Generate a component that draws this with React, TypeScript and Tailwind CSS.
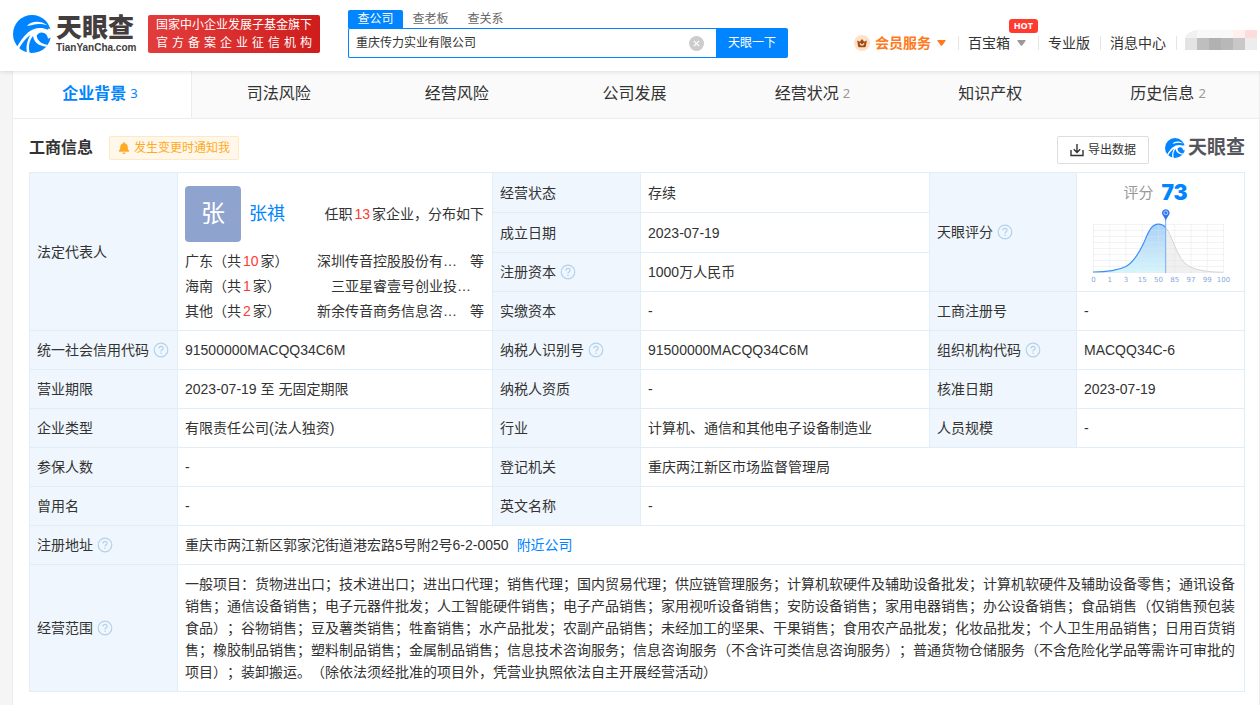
import { useState, type ReactNode } from "react";
import { FaBell } from "react-icons/fa";

const sections = [
  { name: "企业背景", count: 3 },
  { name: "司法风险" },
  { name: "经营风险" },
  { name: "公司发展" },
  { name: "经营状况", count: 2 },
  { name: "知识产权" },
  { name: "历史信息", count: 2 },
];

const searchTabs = ["查公司", "查老板", "查关系"];

const holdings = [
  { area: "广东", count: 10, company: "深圳传音控股股份有…", more: true },
  { area: "海南", count: 1, company: "三亚星睿壹号创业投…", more: false },
  { area: "其他", count: 2, company: "新余传音商务信息咨…", more: true },
];

const axis = [0, 1, 3, 15, 50, 85, 97, 99, 100];

const scope =
  "一般项目：货物进出口；技术进出口；进出口代理；销售代理；国内贸易代理；供应链管理服务；计算机软硬件及辅助设备批发；计算机软硬件及辅助设备零售；通讯设备销售；通信设备销售；电子元器件批发；人工智能硬件销售；电子产品销售；家用视听设备销售；安防设备销售；家用电器销售；办公设备销售；食品销售（仅销售预包装食品）；谷物销售；豆及薯类销售；牲畜销售；水产品批发；农副产品销售；未经加工的坚果、干果销售；食用农产品批发；化妆品批发；个人卫生用品销售；日用百货销售；橡胶制品销售；塑料制品销售；金属制品销售；信息技术咨询服务；信息咨询服务（不含许可类信息咨询服务）；普通货物仓储服务（不含危险化学品等需许可审批的项目）；装卸搬运。（除依法须经批准的项目外，凭营业执照依法自主开展经营活动）";

function LogoMark({ className }: { className?: string }) {
  return (
    <svg viewBox="0 0 114 114" className={className} aria-hidden="true">
      <circle cx="57" cy="57" r="57" fill="#0084ff" />
      <path d="M42 32C56 18 82 16 103 31C86 25 70 26 58 30C52 32 47 33 42 32Z" fill="#fff" />
      <path
        d="M104 44C84 35 60 39 44 53C29 66 19 82 10 99L16 104C26 85 38 70 52 60C42 78 38 96 42 113L50 114C45 94 49 76 60 63C63 82 77 93 100 95L104 89C86 87 73 77 71 62C75 53 86 49 95 55C101 59 104 64 105 71L118 66V48L108 40Z"
        fill="#fff"
      />
    </svg>
  );
}

function Caret({ className }: { className?: string }) {
  return (
    <svg viewBox="0 0 9 6" className={`h-1.5 w-[9px] ${className}`} aria-hidden="true">
      <path d="M1 0H8Q9.3 0 8.5 1L5.2 5.4Q4.5 6.2 3.8 5.4L0.5 1Q-0.3 0 1 0Z" fill="currentColor" />
    </svg>
  );
}

function HelpIcon() {
  return (
    <svg viewBox="0 0 16 16" fill="none" className="h-4 w-4 shrink-0" aria-hidden="true">
      <circle cx="8" cy="8" r="6.8" stroke="#b3d1ea" strokeWidth="1.2" />
      <path
        d="M5.9 6.5C5.9 5.2 6.8 4.4 8 4.4S10.1 5.2 10.1 6.3C10.1 7.7 8 7.8 8 9.5"
        stroke="#b3d1ea"
        strokeWidth="1.2"
      />
      <circle cx="8" cy="11.3" r="0.8" fill="#b3d1ea" />
    </svg>
  );
}

function CrownIcon() {
  return (
    <svg viewBox="0 0 16 16" className="h-4 w-4" aria-hidden="true">
      <circle cx="8" cy="8" r="8" fill="#ffe0c8" />
      <path
        d="M3.2 5.6L5.8 6.8L8 4L10.2 6.8L12.8 5.6L11.9 11.2Q11.7 12.3 10.6 12.3H5.4Q4.3 12.3 4.1 11.2Z"
        fill="#a04c12"
      />
      <path d="M5.9 8.4Q8 11.8 10.1 8.4" stroke="#ffe0c8" strokeWidth="1.2" fill="none" />
    </svg>
  );
}

function ExportIcon() {
  return (
    <svg viewBox="0 0 14 14" fill="none" className="h-3.5 w-3.5" aria-hidden="true">
      <path
        d="M1 7V12.5H13V7M7 1V9.2M3.8 6.2L7 9.4L10.2 6.2"
        stroke="#333"
        strokeWidth="1.4"
      />
    </svg>
  );
}

function AccountTile() {
  return (
    <svg viewBox="0 0 72 20" className="h-5 w-[72px]" aria-hidden="true">
      <path d="M0 8Q2 1 12 0V8Z" fill="#f1f1f1" />
      <rect x="12" width="36" height="8" fill="#f8f8f8" />
      <rect x="48" width="12" height="8" fill="#ffefef" />
      <rect x="60" width="12" height="8" fill="#ffdcdc" />
      <rect y="8" width="12" height="12" fill="#e3e3e3" />
      <rect x="12" y="8" width="12" height="12" fill="#bebebe" />
      <rect x="24" y="8" width="12" height="12" fill="#b1b1b1" />
      <rect x="36" y="8" width="12" height="12" fill="#b8b8b8" />
      <rect x="48" y="8" width="12" height="12" fill="#c8c8c8" />
      <rect x="60" y="8" width="12" height="12" fill="#ededed" />
    </svg>
  );
}

function ScoreChart() {
  return (
    <svg viewBox="0 0 152 78" className="mx-auto h-[78px] w-[152px]" role="img" aria-label="天眼评分 73">
      <defs>
        <linearGradient id="score-fill" x1="0" y1="0" x2="0" y2="1">
          <stop offset="0" stopColor="#a9d2f8" />
          <stop offset="1" stopColor="#d6f5fc" />
        </linearGradient>
      </defs>
      <path
        d="M81.7 20.5C85.5 25 88 33 91 39.7C94 46 96 50.5 99.3 54.5C103 58.5 106 60 111 61.8C118 64 128 65.2 139 65.2V65.5H81.7Z"
        fill="#f0f0f0"
      />
      <path
        d="M9 65C26 65 34 63.5 42 59.5C50 55 55 46 59.5 36.5C63 29 66 17.2 74.5 17.2C78 17.2 80 18.5 81.7 20.5V65.5H9Z"
        fill="url(#score-fill)"
      />
      {axis.map((n, i) => (
        <line key={n} x1={9.5 + i * 16.25} x2={9.5 + i * 16.25} y1="17" y2="66" stroke="#dfe3e8" strokeOpacity="0.6" strokeWidth="0.7" />
      ))}
      {axis.map((n, i) => (
        <line key={n} x1="9" x2="140" y1={17.5 + i * 6} y2={17.5 + i * 6} stroke="#dfe3e8" strokeOpacity="0.6" strokeWidth="0.7" />
      ))}
      <path
        d="M81.7 20.5C85.5 25 88 33 91 39.7C94 46 96 50.5 99.3 54.5C103 58.5 106 60 111 61.8C118 64 128 65.2 139 65.2"
        fill="none"
        stroke="#d4d4d4"
      />
      <path
        d="M9 65C26 65 34 63.5 42 59.5C50 55 55 46 59.5 36.5C63 29 66 17.2 74.5 17.2C78 17.2 80 18.5 81.7 20.5"
        fill="none"
        stroke="#3d8ff5"
        strokeWidth="1.2"
      />
      <line x1="81.7" x2="81.7" y1="13" y2="66" stroke="#7aabf3" />
      <path d="M78 5.8C78 1 85.6 1 85.6 5.8C85.6 8.4 82.7 10.5 81.8 14C80.9 10.5 78 8.4 78 5.8Z" fill="#2f76ee" />
      <circle cx="81.8" cy="5.8" r="1.9" fill="none" stroke="#c5dcff" strokeWidth="0.9" />
      {axis.map((n, i) => (
        <text
          key={n}
          x={9.5 + i * 16.25}
          y="75"
          textAnchor="middle"
          fill="#86a8dc"
          className="font-['DejaVu_Sans'] text-[7px]"
        >
          {n}
        </text>
      ))}
    </svg>
  );
}

function Label({ children, help, rowSpan }: { children: ReactNode; help?: boolean; rowSpan?: number }) {
  return (
    <th
      scope="row"
      rowSpan={rowSpan}
      className="border border-[#e1edf7] bg-[#eff6fd] py-2 pr-2 pl-[7px] text-left font-normal"
    >
      <span className="flex items-center gap-1 whitespace-nowrap">
        {children}
        {help && <HelpIcon />}
      </span>
    </th>
  );
}

function Value({ children = "-", colSpan }: { children?: ReactNode; colSpan?: number }) {
  return (
    <td colSpan={colSpan} className="border border-[#e1edf7] py-2 pr-2 pl-[7px] [text-spacing-trim:space-all]">
      {children}
    </td>
  );
}

function Count({ children }: { children: ReactNode }) {
  return <span className="mx-0.5 text-[#ff3b30]">{children}</span>;
}

function Header() {
  const [query, setQuery] = useState("重庆传力实业有限公司");
  const [tab, setTab] = useState("查公司");

  return (
    <header className="relative flex items-start bg-white pt-2.5 pr-[3px] pb-[13px] pl-[13px] shadow-[0_1px_4px_rgba(0,0,0,0.12)]">
      <a href="#" className="mt-[5px] flex h-[38px] items-center gap-[5px]">
        <LogoMark className="h-[38px] w-[38px]" />
        <span className="flex w-20 flex-col text-[#443d3e]">
          <span className="text-[26px] leading-7 font-black">天眼查</span>
          <span className="text-[10px] leading-3 font-bold">TianYanCha.com</span>
        </span>
      </a>
      <div className="mt-[5px] ml-3 h-[38px] w-[172px] rounded-xs bg-linear-to-r from-[#e33c3c] to-[#cf1c1c] px-2 text-xs leading-[18px] whitespace-nowrap text-white">
        <p className="pt-px">国家中小企业发展子基金旗下</p>
        <p className="[text-align-last:justify]">官方备案企业征信机构</p>
      </div>
      <div className="ml-7 w-[440px] text-xs">
        <div className="flex">
          {searchTabs.map((name) => (
            <button
              key={name}
              type="button"
              onClick={() => setTab(name)}
              className={`h-[18px] w-[55px] rounded-t-xs leading-[18px] ${
                name === tab ? "bg-[#0084ff] text-white" : "text-[#666]"
              }`}
            >
              {name}
            </button>
          ))}
        </div>
        <form className="flex h-[30px]" onSubmit={(e) => e.preventDefault()}>
          <div className="flex flex-1 items-center rounded-l-xs border border-r-0 border-[#0084ff] pr-3 pl-[7px]">
            <input
              aria-label="查公司"
              value={query}
              onChange={(e) => setQuery(e.target.value)}
              className="min-w-0 flex-1 text-[#333] outline-none"
            />
            <button type="button" aria-label="清空" onClick={() => setQuery("")}>
              <svg viewBox="0 0 15 15" className="h-[15px] w-[15px]">
                <circle cx="7.5" cy="7.5" r="7.5" fill="#ccc" />
                <path d="M4.8 4.8L10.2 10.2M10.2 4.8L4.8 10.2" stroke="#fff" strokeWidth="1.2" />
              </svg>
            </button>
          </div>
          <button type="submit" className="w-[72px] rounded-r-xs bg-[#0084ff] text-white">
            天眼一下
          </button>
        </form>
      </div>
      <nav className="mt-[25px] ml-auto text-sm leading-[14px] whitespace-nowrap text-[#333]">
        <ul className="flex items-center">
          <li className="flex items-center pr-3 font-bold text-[#ff7a1c]">
            <CrownIcon />
            <a href="#" className="ml-[5px]">会员服务</a>
            <Caret className="ml-1.5" />
          </li>
          <li className="relative flex h-3.5 items-center border-l border-[#e5e5e5] pr-3 pl-[9px]">
            <a href="#">百宝箱</a>
            <Caret className="ml-[7px] text-[#999]" />
            <span className="absolute -top-[17px] right-0 h-3.5 rounded-[3px] bg-[#ff3b30] px-[5px] font-['Open_Sans'] text-[9px] leading-3.5 font-bold text-white">
              HOT
            </span>
          </li>
          <li className="flex h-3.5 items-center border-l border-[#e5e5e5] pr-2.5 pl-[9px]">
            <a href="#">专业版</a>
          </li>
          <li className="flex h-3.5 items-center border-l border-[#e5e5e5] pr-2.5 pl-[9px]">
            <a href="#">消息中心</a>
          </li>
          <li className="flex h-3.5 items-end border-l border-[#e5e5e5] pl-2">
            <AccountTile />
          </li>
        </ul>
      </nav>
    </header>
  );
}

function SectionTabs() {
  return (
    <nav className="flex border-b border-[#ededed] bg-[#fafafa]">
      {sections.map((s, i) => (
        <a
          key={s.name}
          href="#"
          className={`flex h-[47px] flex-1 items-center justify-center gap-1 pr-1 pb-px ${
            i === 0 ? "border-r border-[#ededed] bg-white text-[#0084ff]" : "text-[#333]"
          }`}
        >
          <span className={i === 0 ? "font-bold" : ""}>{s.name}</span>
          {s.count && (
            <span className={`font-['Noto_Sans'] text-[13px] ${i === 0 ? "" : "text-[#999]"}`}>{s.count}</span>
          )}
        </a>
      ))}
    </nav>
  );
}

function CompanyTable() {
  return (
    <table className="w-full table-fixed border-collapse text-sm leading-[22px] text-[#333]">
      <colgroup>
        <col className="w-[148px]" />
        <col className="w-[315px]" />
        <col className="w-[148px]" />
        <col />
        <col className="w-[147px]" />
        <col className="w-[168px]" />
      </colgroup>
      <tbody>
        <tr className="h-10">
          <Label rowSpan={4}>法定代表人</Label>
          <td
            rowSpan={4}
            className="border border-[#e1edf7] pt-[13px] pr-2 pb-1 pl-[7px] align-top [text-spacing-trim:space-all]"
          >
            <div className="flex items-center">
              <span className="flex h-14 w-14 items-center justify-center rounded-sm bg-[#8ea4cf] text-2xl text-white">
                张
              </span>
              <a href="#" className="ml-2 text-lg text-[#0084ff]">张祺</a>
              <span className="ml-auto">
                任职<Count>13</Count>家企业，分布如下
              </span>
            </div>
            <ul className="mt-[7px] leading-[25px]">
              {holdings.map((h) => (
                <li key={h.area} className="flex">
                  <span>
                    {h.area}（共<Count>{h.count}</Count>家）
                  </span>
                  <a href="#" className="mr-[13px] ml-auto">{h.company}</a>
                  {h.more && <span>等</span>}
                </li>
              ))}
            </ul>
          </td>
          <Label>经营状态</Label>
          <Value>存续</Value>
          <Label rowSpan={3} help>天眼评分</Label>
          <td rowSpan={3} className="border border-[#e1edf7] pt-1.5 pr-0.5 align-top">
            <div className="flex items-center justify-center gap-2 pr-2 leading-7">
              <span className="text-[15px] text-[#999]">评分</span>
              <span className="font-['Inter'] text-[21px] font-black text-[#0084ff]">73</span>
            </div>
            <ScoreChart />
          </td>
        </tr>
        <tr className="h-10">
          <Label>成立日期</Label>
          <Value>2023-07-19</Value>
        </tr>
        <tr>
          <Label help>注册资本</Label>
          <Value>1000万人民币</Value>
        </tr>
        <tr>
          <Label>实缴资本</Label>
          <Value />
          <Label>工商注册号</Label>
          <Value />
        </tr>
        <tr>
          <Label help>统一社会信用代码</Label>
          <Value>91500000MACQQ34C6M</Value>
          <Label help>纳税人识别号</Label>
          <Value>91500000MACQQ34C6M</Value>
          <Label help>组织机构代码</Label>
          <Value>MACQQ34C-6</Value>
        </tr>
        <tr>
          <Label>营业期限</Label>
          <Value>2023-07-19 至 无固定期限</Value>
          <Label>纳税人资质</Label>
          <Value />
          <Label>核准日期</Label>
          <Value>2023-07-19</Value>
        </tr>
        <tr>
          <Label>企业类型</Label>
          <Value>有限责任公司(法人独资)</Value>
          <Label>行业</Label>
          <Value>计算机、通信和其他电子设备制造业</Value>
          <Label>人员规模</Label>
          <Value />
        </tr>
        <tr>
          <Label>参保人数</Label>
          <Value />
          <Label>登记机关</Label>
          <Value colSpan={3}>重庆两江新区市场监督管理局</Value>
        </tr>
        <tr>
          <Label>曾用名</Label>
          <Value />
          <Label>英文名称</Label>
          <Value colSpan={3} />
        </tr>
        <tr>
          <Label help>注册地址</Label>
          <Value colSpan={5}>
            重庆市两江新区郭家沱街道港宏路5号附2号6-2-0050
            <a href="#" className="ml-2 text-[#0084ff]">附近公司</a>
          </Value>
        </tr>
        <tr>
          <Label help>经营范围</Label>
          <Value colSpan={5}>{scope}</Value>
        </tr>
      </tbody>
    </table>
  );
}

export default function App() {
  return (
    <div className="flex min-h-screen flex-col bg-[#f5f5f5] font-['Liberation_Sans','Noto_Sans_CJK_SC',sans-serif]">
      <Header />
      <main className="ml-3 flex-1 border-x border-[#ededed] bg-white">
        <SectionTabs />
        <section className="pt-[17px] pr-3.5 pb-3 pl-4">
          <div className="mb-2 flex items-start">
            <h2 className="leading-6 font-bold text-[#333]">工商信息</h2>
            <button
              type="button"
              className="ml-4 flex h-6 items-center gap-1 rounded-xs border border-[#ffe8c4] bg-[#fff7e9] px-2 text-xs text-[#ffaa22]"
            >
              <FaBell className="h-3 w-3" />
              发生变更时通知我
            </button>
            <button
              type="button"
              className="ml-auto flex h-7 items-center gap-1 rounded-xs border border-[#ddd] px-3 text-xs text-[#333]"
            >
              <ExportIcon />
              导出数据
            </button>
            <div className="ml-4 flex h-6 items-center gap-[3px] text-[#55555c]">
              <LogoMark className="h-5 w-5" />
              <span className="text-[19px] leading-6 font-bold">天眼查</span>
            </div>
          </div>
          <CompanyTable />
        </section>
      </main>
    </div>
  );
}
